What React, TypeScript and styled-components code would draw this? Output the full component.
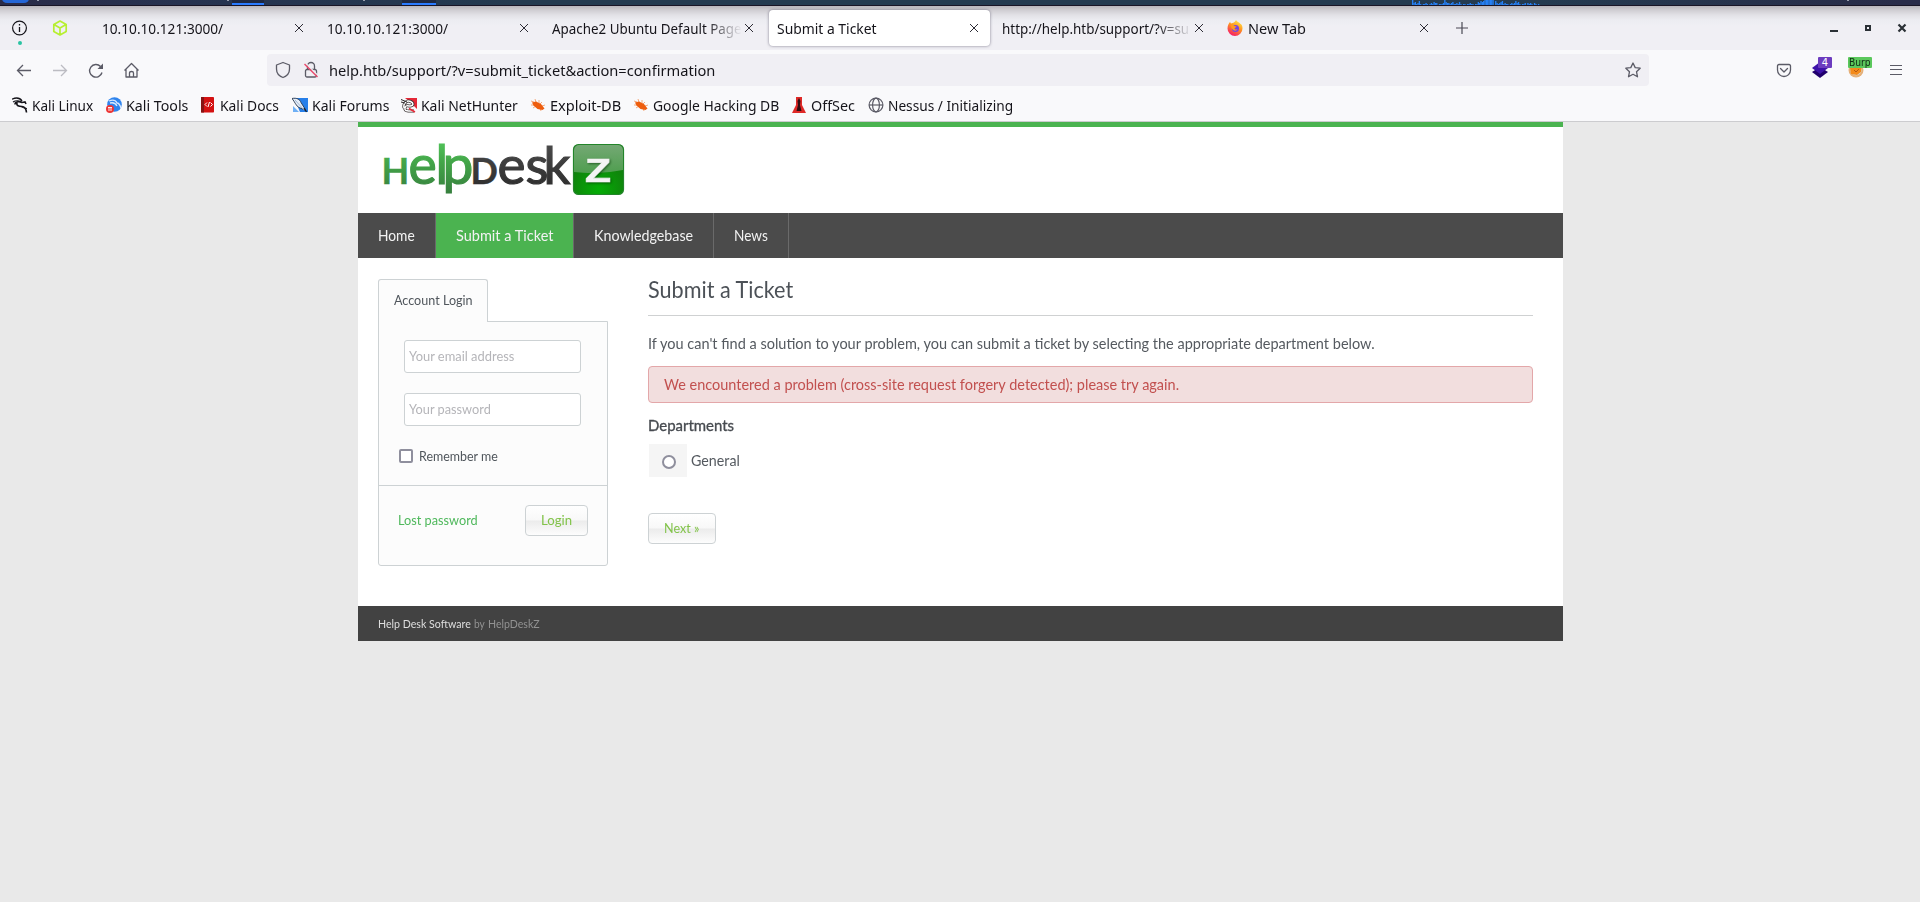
import React, { useLayoutEffect, useRef, useState } from 'react';
import styled, { createGlobalStyle } from 'styled-components';

const GlobalStyle = createGlobalStyle`
  * { box-sizing: border-box; }
  body {
    margin: 0;
    height: 902px;
    overflow: hidden;
    background: #e9e9e9;
    font-family: "Noto Sans", "Open Sans", sans-serif;
    color: #15141a;
  }
`;

/* ---------- condensed text ---------- */

const FitBox = styled.span<{ $w: number }>`
  display: block;
  flex: none;
  width: ${(p) => p.$w}px;
  white-space: nowrap;
  text-align: left;
`;
const FitInner = styled.span`
  display: inline-block;
  transform-origin: 0 50%;
`;

/** Condenses or widens its text so that the line is exactly `w` wide. */
function Fit({ w, children }: { w: number; children: React.ReactNode }) {
  const ref = useRef<HTMLSpanElement>(null);
  const [scale, setScale] = useState(1);
  useLayoutEffect(() => {
    if (ref.current) setScale(w / ref.current.offsetWidth);
  }, [w]);
  return (
    <FitBox $w={w}>
      <FitInner ref={ref} style={{ transform: `scaleX(${scale})` }}>{children}</FitInner>
    </FitBox>
  );
}

/* ---------- desktop panel ---------- */

const DesktopPanel = styled.div`
  height: 6px;
  border-bottom: 1px solid #191526;
  background: linear-gradient(90deg, #2a2b48 0, #273350 180px, #243b50 520px, #243b50 1540px, #292c49 1900px);
  svg { display: block; }
`;

const loads = [5, 2, 3, 1, 2, 4, 1, 0, 1, 1, 2, 1, 0, 1, 2, 1, 3, 2, 2, 0, 1, 1, 1, 2, 5, 3, 2, 2, 1, 2, 3, 1, 1, 2, 1, 3, 1, 0, 1, 1, 0, 1, 1, 2, 1, 1, 0, 1, 1, 3, 2, 4, 3, 4, 5, 5, 5, 5, 5, 5, 5, 0, 4, 2, 1, 2, 3, 4, 1, 2, 1, 1, 0, 1, 2, 1, 2, 4, 2, 3, 1, 0, 1, 1, 2, 0, 2, 1, 2, 1, 0, 2, 1, 0, 1];

const PanelArt = () => (
  <svg width="1920" height="5">
    <rect x="2" y="-6" width="27" height="9" rx="5" fill="#2466d6" />
    <rect x="37" width="2" height="1" fill="#999fae" />
    <rect x="227" width="2" height="1" fill="#999fae" />
    <rect x="363" width="2" height="1" fill="#999fae" />
    <rect x="1847" width="2" height="1" fill="#999fae" />
    <rect x="232" width="32" height="3" fill="#1e2842" />
    <rect x="402" width="34" height="3" fill="#1e2842" />
    <rect x="232" y="3" width="32" height="2" fill="#2a7bff" />
    <rect x="402" y="3" width="34" height="2" fill="#2a7bff" />
    {loads.map((h, i) => (
      <rect key={i} x={1412 + i * 1.34} y={5 - h} width="1.34" height={h} fill="#2580f5" />
    ))}
  </svg>
);

/* ---------- tab strip ---------- */

const TabStrip = styled.div`
  height: 44px;
  display: flex;
  align-items: center;
  background: linear-gradient(180deg, #b9b6bc 0, #cfcdd2 4px, #e2e1e6 9px, #ececf1 14px, #f0eff4 20px);
  font-size: 15px;
`;
const Pinned = styled.div`
  width: 40px;
  height: 44px;
  flex: none;
  display: flex;
  flex-direction: column;
  align-items: center;
  padding-top: 14px;
  gap: 4px;
`;
const Dot = styled.i`
  width: 4px;
  height: 4px;
  border-radius: 2px;
  background: #2ac3a2;
`;
const Tab = styled.div<{ $active?: boolean; $icon?: boolean; $first?: boolean }>`
  flex: none;
  width: 221px;
  height: 36px;
  margin: 0 2px 0 ${(p) => (p.$first ? 14 : 2)}px;
  padding: 0 9px 0 8px;
  display: flex;
  align-items: center;
  gap: 5px;
  border-radius: 4px;
  line-height: 36px;
  background: ${(p) => (p.$active ? '#fff' : 'transparent')};
  box-shadow: ${(p) => (p.$active ? '0 0 3px rgba(70, 66, 90, .65)' : 'none')};
`;
const TabTitle = styled.div<{ $fade?: boolean }>`
  flex: 1;
  min-width: 0;
  overflow: hidden;
  margin-right: -5px;
  mask-image: ${(p) => (p.$fade ? 'linear-gradient(90deg, #000 calc(100% - 36px), transparent 100%)' : 'none')};
`;
const NewTabButton = styled.div`
  width: 48px;
  padding-left: 12.5px;
  svg { display: block; }
`;
const WindowButtons = styled.div`
  margin-left: auto;
  padding-right: 12px;
  display: flex;
  gap: 22px;
`;

const CloseX = () => (
  <svg width="14" height="14" viewBox="-7 -7 14 14" stroke="#2d2c35" strokeWidth="1">
    <path d="M-4-4 4 4M4-4-4 4" />
  </svg>
);

/* ---------- navigation bar ---------- */

const NavBar = styled.div`
  height: 40px;
  display: flex;
  align-items: center;
  background: #f9f9fb;
  padding: 0 0 0 12px;
  svg { display: block; flex: none; }
`;
const NavButtons = styled.div`
  display: flex;
  width: 255px;
  gap: 12px;
`;
const UrlBar = styled.div`
  width: 1382px;
  height: 32px;
  border-radius: 4px;
  background: #f0eff4;
  display: flex;
  align-items: center;
  padding: 0 4px;
  font-size: 15px;
  line-height: 31px;
  > :nth-child(3) { margin-left: 7px; }
  > :last-child { margin-left: auto; }
`;
const Extensions = styled.div`
  display: flex;
  margin-left: 123px;
  gap: 12px;
  > :last-child { margin-left: 4px; }
`;
const ExtIcon = styled.div`
  position: relative;
  width: 24px;
  height: 24px;
`;
const Badge = styled.span<{ $bg: string; $fg: string; $w: number }>`
  position: absolute;
  top: -1px;
  right: ${(p) => (p.$w > 20 ? -4 : 0)}px;
  width: ${(p) => p.$w}px;
  height: 11px;
  border-radius: 1px;
  background: ${(p) => p.$bg};
  color: ${(p) => p.$fg};
  font: 10px/11px "DejaVu Sans", sans-serif;
  display: flex;
  justify-content: center;
`;

/* ---------- bookmarks ---------- */

const Bookmarks = styled.div`
  height: 32px;
  display: flex;
  gap: 12.2px;
  padding: 0 0 1px 12px;
  background: #f9f9fb;
  border-bottom: 1px solid #cccccf;
  font-size: 15px;
  line-height: 30px;
`;
const Bookmark = styled.div`
  display: flex;
  align-items: center;
  gap: 4px;
  svg { display: block; flex: none; }
`;

const Spider = () => (
  <svg width="16" height="16" viewBox="0 0 16 16">
    <path d="M1 4l3 1M1 8l4 0M3 11l3-2M5 2l1 3M9 3v3M12 5l-2 2M15 8l-3 1M11 14l-1-3" stroke="#f3a271" strokeWidth=".9" />
    <path d="M2 5.500 6 4.500l5 2.500 3.500 4.500-2 1.500-5-1-4-3.500z" fill="#ee5d0d" />
  </svg>
);

const bookmarkItems: { title: string; w: number; icon: React.ReactNode }[] = [
  {
    title: 'Kali Linux', w: 61.5, icon: (
      <svg width="16" height="16" viewBox="0 0 16 16" fill="none" stroke="#15141a">
        <path d="M0 2.2C4 .5 8 1 10 4" strokeWidth="1.4" />
        <path d="M1 5C4 3 8 3.500 9.500 5.200" strokeWidth="1.100" />
        <path d="M3 7.500C3 4 8 4.500 10 5.500L13 5l1 2M5 5.500C4 9 7 9.500 10 9.500s4 2 4.500 6" strokeWidth="1.600" />
        <path d="M9 9.500 12 11l3 .5" />
      </svg>
    ),
  },
  {
    title: 'Kali Tools', w: 62.5, icon: (
      <svg width="16" height="16" viewBox="0 0 16 16">
        <circle cx="8.500" cy="7.500" r="7.300" fill="#2f84ed" />
        <path d="M3 4c5-2 7 0 8 2 2 0 3 2 4 5M4 6c4-1 6 1 7 3" fill="none" stroke="#d8e9ff" strokeWidth="1.300" />
        <circle cx="4" cy="12" r="4" fill="#ed3434" />
        <path d="M2 10.500h4M3 10.500v3.500M5 10.500v3.500" stroke="#fff" strokeWidth=".9" />
      </svg>
    ),
  },
  {
    title: 'Kali Docs', w: 59, icon: (
      <svg width="16" height="16" viewBox="0 0 16 16">
        <rect x="1" width="13" height="15.500" rx=".8" fill="#d41111" />
        <rect x="1" width="3" height="15.500" fill="#861414" />
        <path d="M7 5.500 5 7.500l2 2M10.500 5.500l2 2-2 2M9.500 5 8 10" fill="none" stroke="#fff" />
      </svg>
    ),
  },
  {
    title: 'Kali Forums', w: 77.5, icon: (
      <svg width="16" height="16" viewBox="0 0 16 16">
        <path d="M2 1h14v14H8z" fill="#277fe9" />
        <path d="M1 9l6 6H1z" fill="#6fb0f5" />
        <path d="M0 1.500c5-1 8 1 9 4l5 8-7-3C4 9 3 5 0 1.500z" fill="#e5edf8" stroke="#26374d" strokeWidth=".9" />
        <path d="M3 3l9 10" stroke="#8fa9c9" strokeWidth=".8" />
        <path d="M12 11l2.500 4" stroke="#15202e" strokeWidth="1.300" />
      </svg>
    ),
  },
  {
    title: 'Kali NetHunter', w: 96.5, icon: (
      <svg width="16" height="16" viewBox="0 0 16 16" fill="none">
        <path d="M4 1h12v11L9 5z" fill="#e52837" />
        <path d="M3 11C2 6 6 3 9.500 4.500s3 4 0 4.500S5 7 4 11s6 3 9 3" stroke="#3b3435" strokeWidth="3" />
        <path d="M3 11C2 6 6 3 9.500 4.500s3 4 0 4.500S5 7 4 11s6 3 9 3" stroke="#fff" strokeWidth="1.500" />
        <path d="M0 2.500 6 5M0 5l4 1" stroke="#292526" />
        <path d="M8 11.500 14 15" stroke="#e52837" strokeWidth="1.500" />
      </svg>
    ),
  },
  { title: 'Exploit-DB', w: 71, icon: <Spider /> },
  { title: 'Google Hacking DB', w: 126, icon: <Spider /> },
  {
    title: 'OffSec', w: 44, icon: (
      <svg width="16" height="16" viewBox="0 0 16 16">
        <path d="M5 0h6v8l4 8H1l4-8z" fill="#df2927" />
        <path d="M8 1l1.500 3L9 8l1.500 6h-5L7 8l-.5-4z" fill="#320d12" />
      </svg>
    ),
  },
  {
    title: 'Nessus / Initializing', w: 125, icon: (
      <svg width="16" height="16" viewBox="0 0 16 16" fill="none" stroke="#5b5b66" strokeWidth="1.200">
        <circle cx="8" cy="8" r="6.900" />
        <ellipse cx="8" cy="8" rx="3.400" ry="6.900" />
        <path d="M1 8h14" />
      </svg>
    ),
  },
];

/* ---------- HelpDeskZ page ---------- */

const Site = styled.div`
  width: 1205px;
  margin-left: 358px;
  border-top: 5px solid #4bb350;
  background: #fff;
  font-family: Lato, "Noto Sans", sans-serif;
`;
const SiteHeader = styled.div`
  height: 86px;
  padding: 10px 0 0 25px;
  svg { display: block; }
`;
const SiteNav = styled.div`
  display: flex;
  height: 45px;
  background: #4b4b4b;
`;
const NavLink = styled.a<{ $active?: boolean }>`
  display: block;
  padding: 0 20px;
  border-right: 1px solid #6a6a6a;
  background: ${(p) => (p.$active ? '#4bb350' : 'transparent')};
  color: #f2f2f2;
  font-size: 16px;
  line-height: 43px;
`;
const Main = styled.div`
  display: flex;
  align-items: flex-start;
  height: 348px;
  padding: 21px 30px 0 20px;
  gap: 40px;
`;
const Sidebar = styled.div`
  width: 230px;
  color: #50565c;
  font-size: 14px;
`;
const LoginTab = styled.div`
  position: relative;
  width: 110px;
  height: 43px;
  margin-bottom: -1px;
  padding-left: 14.5px;
  border: 1px solid #cdd2d4;
  border-bottom: 0;
  border-radius: 3px 3px 0 0;
  background: #fcfcfc;
  line-height: 39px;
`;
const LoginPanel = styled.div`
  height: 245px;
  border: 1px solid #cdd2d4;
  border-radius: 0 0 3px 3px;
  background: #fcfcfc;
`;
const LoginFields = styled.div`
  height: 164px;
  padding: 18px 25px 0;
  border-bottom: 1px solid #cdd2d4;
`;
const Field = styled.div`
  width: 177px;
  height: 33px;
  margin-bottom: 20px;
  padding-left: 4px;
  border: 1px solid #cdd2d4;
  border-radius: 3px;
  background: #fff;
  color: #b5b5b9;
  line-height: 29px;
`;
const Remember = styled.label`
  display: flex;
  align-items: center;
  gap: 6px;
  margin: 21px 0 0 -5px;
  line-height: 17px;
`;
const CheckBox = styled.i`
  width: 14px;
  height: 14px;
  border: 2px solid #8f8f9d;
  border-radius: 2px;
  background: #fff;
`;
const LoginActions = styled.div`
  display: flex;
  justify-content: space-between;
  padding: 19px 19px 0;
  color: #4fb85c;
  line-height: 30px;
`;
const Button = styled.div<{ $w: number }>`
  width: ${(p) => p.$w}px;
  height: 31px;
  padding-left: 15px;
  border: 1px solid #cdd2d4;
  border-radius: 4px;
  background: linear-gradient(180deg, #fff 0, #f8f8f8 49%, #ebebeb 51%, #fdfdfd 100%);
  color: #82c34a;
  font-size: 14px;
  line-height: 28px;
`;
const Content = styled.div`
  flex: 1;
  color: #555a60;
  font-size: 16px;
`;
const Title = styled.div`
  height: 37px;
  border-bottom: 1px solid #cfd1d2;
  font-size: 24px;
  line-height: 19px;
  color: #4c5157;
`;
const Intro = styled.div`
  margin-top: 14px;
  line-height: 25px;
`;
const Alert = styled.div`
  height: 37px;
  margin-top: 11px;
  padding-left: 14.5px;
  border: 1px solid #e3a7a9;
  border-radius: 4px;
  background: #f2dede;
  color: #c2504f;
  line-height: 33px;
`;
const SubHead = styled.div`
  margin-top: 10px;
  height: 31px;
  line-height: 23px;
  -webkit-text-stroke: 0.35px #474b50;
  color: #474b50;
`;
const Department = styled.label`
  display: flex;
  align-items: flex-start;
  gap: 4px;
  height: 33px;
  margin: 0 0 36px 1px;
  line-height: 31px;
`;
const RadioCell = styled.div`
  width: 38px;
  height: 33px;
  padding: 11px 0 0 13px;
  background: #f5f5f5;
`;
const Radio = styled.i`
  display: block;
  width: 14px;
  height: 14px;
  border: 2px solid #8f8f9d;
  border-radius: 50%;
  background: #fff;
`;
const Footer = styled.div`
  display: flex;
  gap: 3px;
  height: 35px;
  padding-left: 20px;
  background: #424242;
  color: #929292;
  font-size: 12px;
  line-height: 35px;
  b { font-weight: 400; color: #dedede; }
`;

const Logo = () => (
  <svg width="242" height="76" viewBox="0 -1 242 76" fontFamily="Lato, sans-serif" strokeWidth="1.2">
    <defs>
      <linearGradient id="leaf" gradientUnits="userSpaceOnUse" x1="0" y1="5" x2="0" y2="58">
        <stop offset="0" stopColor="#50c158" />
        <stop offset=".35" stopColor="#43a649" />
        <stop offset="1" stopColor="#357c3c" />
      </linearGradient>
      <linearGradient id="ink" gradientUnits="userSpaceOnUse" x1="0" y1="5" x2="0" y2="50">
        <stop offset="0" stopColor="#4a4a4a" />
        <stop offset="1" stopColor="#2e2e2e" />
      </linearGradient>
      <radialGradient id="tile" cx=".5" cy=".9" r=".75">
        <stop offset="0" stopColor="#04ad05" />
        <stop offset="1" stopColor="#14750f" />
      </radialGradient>
      <linearGradient id="shine" x1="0" y1="0" x2="0" y2="1">
        <stop offset="0" stopColor="#74a874" />
        <stop offset="1" stopColor="#4f9e4f" />
      </linearGradient>
    </defs>
    <text y="45.500" fontSize="53.500" fill="url(#leaf)" stroke="url(#leaf)">
      <tspan x="-1.500" fontSize="36" fontWeight="700" strokeWidth=".4">H</tspan>
      <tspan x="25.500">e</tspan>
      <tspan x="52.500">l</tspan>
      <tspan x="59.500" fontSize="55">p</tspan>
    </text>
    <text y="45.500" fontSize="53" fill="url(#ink)" stroke="url(#ink)">
      <tspan x="87.500" fontSize="36" fontWeight="700" strokeWidth=".4">D</tspan>
      <tspan x="114.500">e</tspan>
      <tspan x="142.500">s</tspan>
      <tspan x="160.500">k</tspan>
    </text>
    <rect x="190.500" y="6.500" width="50" height="50" rx="5" fill="url(#tile)" stroke="#23852a" />
    <path d="M191 12a5 5 0 0 1 5-5h39a5 5 0 0 1 5 5v20q-24 5-49 2z" fill="url(#shine)" />
    <g fontFamily="Liberation Sans, sans-serif" fontWeight="700">
      <text
        x="202"
        y="43.500"
        fontSize="33"
        textLength="26"
        lengthAdjust="spacingAndGlyphs"
        fill="#f4f4f4"
        stroke="#f4f4f4"
        strokeWidth=".7"
        style={{ filter: 'drop-shadow(1px 1.5px 1px rgba(0, 50, 0, .6))' }}
      >
        Z
      </text>
    </g>
  </svg>
);

const FirefoxIcon = () => (
  <svg width="16" height="16" viewBox="0 0 16 16">
    <defs>
      <linearGradient id="flame" x1=".8" y1="0" x2=".3" y2="1">
        <stop offset="0" stopColor="#fff04a" />
        <stop offset=".45" stopColor="#ff9420" />
        <stop offset="1" stopColor="#f5156c" />
      </linearGradient>
    </defs>
    <path d="M9 0c1 2 3 2 4.500 4 1-.3 2 2 2 4.500a7.500 7.500 0 0 1-15 0C.5 5.500 2 3 3 2l1 1.500C6 3 8 2.500 9 0z" fill="url(#flame)" />
    <circle cx="8.500" cy="8.500" r="3.500" fill="#7543e3" />
    <path d="M3.500 5c2-.5 3 0 4 1l2 .5c0 1-2 1.200-2 2s2 1.500 3 .5c-1 3-6 2-7-4z" fill="#ff9a1f" />
  </svg>
);

export default function App() {
  return (
    <>
      <GlobalStyle />
      <DesktopPanel><PanelArt /></DesktopPanel>

      <TabStrip>
        <Pinned>
          <svg width="16" height="17" viewBox="0 0 16 17" fill="none" stroke="#15141a" strokeWidth="1.200">
            <circle cx="7.500" cy="8" r="6.900" />
            <path d="M7.500 7v5M7.500 4v1.500" strokeWidth="1.300" />
          </svg>
          <Dot />
        </Pinned>
        <Pinned>
          <svg width="16" height="16" viewBox="0 0 16 16" fill="none" stroke="#b7ef30" strokeWidth="1.700" strokeLinejoin="round">
            <path d="M8 1l6.200 3.500v7L8 15l-6.200-3.500v-7zM2 4.600 8 8l6-3.400M8 8v7" />
          </svg>
        </Pinned>
        <Tab $first>
          <TabTitle><Fit w={121}>10.10.10.121:3000/</Fit></TabTitle>
          <CloseX />
        </Tab>
        <Tab>
          <TabTitle><Fit w={121}>10.10.10.121:3000/</Fit></TabTitle>
          <CloseX />
        </Tab>
        <Tab>
          <TabTitle $fade><Fit w={190}>Apache2 Ubuntu Default Page</Fit></TabTitle>
          <CloseX />
        </Tab>
        <Tab $active>
          <TabTitle><Fit w={100}>Submit a Ticket</Fit></TabTitle>
          <CloseX />
        </Tab>
        <Tab>
          <TabTitle $fade><Fit w={187}>http://help.htb/support/?v=su</Fit></TabTitle>
          <CloseX />
        </Tab>
        <Tab $icon>
          <FirefoxIcon />
          <TabTitle><Fit w={58}>New Tab</Fit></TabTitle>
          <CloseX />
        </Tab>
        <NewTabButton>
          <svg width="14" height="14" viewBox="0 0 14 14" stroke="#4a4954" strokeWidth="1.200"><path d="M7 1v12M1 7h12" /></svg>
        </NewTabButton>
        <WindowButtons>
          <svg width="12" height="12" fill="#2a3035"><rect x="2" y="8" width="8" height="2" /></svg>
          <svg width="12" height="12" fill="none" stroke="#2a3035" strokeWidth="2"><rect x="4" y="4" width="4" height="4" /></svg>
          <svg width="12" height="12" stroke="#2a3035" strokeWidth="2.200"><path d="M2.500 2.500l7 7M9.500 2.500l-7 7" /></svg>
        </WindowButtons>
      </TabStrip>

      <NavBar>
        <NavButtons>
          <svg width="24" height="24" viewBox="-12 -12 24 24" fill="none" stroke="#5b5b66" strokeWidth="1.300">
            <path d="M7 .5H-6M-1-5-6.500.5-1 6" />
          </svg>
          <svg width="24" height="24" viewBox="-12 -12 24 24" fill="none" stroke="#bcbcc2" strokeWidth="1.300">
            <path d="M-7 .5H6M1-5 6.500.5 1 6" />
          </svg>
          <svg width="24" height="24" viewBox="-12 -12 24 24" fill="none" stroke="#5b5b66" strokeWidth="1.400">
            <path d="M6 2.500A6.300 6.300 0 1 1 4.500-3.500" />
            <path d="M7-6.500V-1H1.500z" fill="#5b5b66" stroke="none" />
          </svg>
          <svg width="24" height="24" viewBox="-12 -12 24 24" fill="none" stroke="#5b5b66" strokeWidth="1.300" strokeLinejoin="round">
            <path d="M-7.500 .5-.5-6.500 6.500 .5M-6-1v8H5v-8M-2.500 7V3q0-1.500 2-1.500T1.500 3v4" />
          </svg>
        </NavButtons>
        <UrlBar>
          <svg width="24" height="24" viewBox="-12 -12 24 24" fill="none" stroke="#5b5b66" strokeWidth="1.300" strokeLinejoin="round">
            <path d="M0-7.500 6.500-5V-1C6.500 3 4 6 0 7.500-4 6-6.500 3-6.500-1v-4z" />
          </svg>
          <svg width="27" height="24" viewBox="-16 -12 27 24" fill="none" stroke="#5b5b66" strokeWidth="1.300">
            <rect x="-5.500" y="-.5" width="11" height="7.500" rx="1.500" />
            <path d="M-3.500-.5V-4a3.500 3.500 0 0 1 7 0v3.500" />
            <path d="M-5.500-7 7.500 6" stroke="#f0eff4" strokeWidth="1.200" />
            <path d="M-6.500-6 6.500 7" stroke="#e8496c" strokeWidth="1.400" />
          </svg>
          <Fit w={386.5}>help.htb/support/?v=submit_ticket&amp;action=confirmation</Fit>
          <svg width="24" height="24" viewBox="-12 -12 24 24" fill="none" stroke="#5b5b66" strokeWidth="1.300" strokeLinejoin="round">
            <path d="M0-7 2.200-2.400 7.200-1.800 3.500 1.700 4.500 6.800 0 4.300-4.500 6.800-3.500 1.700-7.200-1.800-2.200-2.400z" />
          </svg>
        </UrlBar>
        <Extensions>
          <svg width="24" height="24" viewBox="-12 -12 24 24" fill="none" stroke="#5b5b66" strokeWidth="1.300" strokeLinecap="round" strokeLinejoin="round">
            <path d="M-5-5.500H5q1.500 0 1.500 1.500V0a6.500 6.500 0 0 1-13 0v-4q0-1.500 1.500-1.500zM-3.500-1.500 0 2l3.500-3.500" />
          </svg>
          <ExtIcon>
            <svg width="24" height="24" viewBox="-12 -12 24 24">
              <path d="M0-3 8 2 0 8-8 2z" fill="#21006d" />
              <path d="M0-8 8-2 0 4-8-2z" fill="#3d12a8" />
            </svg>
            <Badge $bg="#6c3cbf" $fg="#fff" $w={14}>4</Badge>
          </ExtIcon>
          <ExtIcon>
            <svg width="24" height="24" viewBox="-12 -12 24 24">
              <circle cy="0" r="7.500" fill="#e5b078" />
              <circle cy="-.5" r="5.800" fill="#d9e0e2" />
              <path d="M-6-2 3-3 6-5 5 2 1 5-5 4z" fill="#f48a19" />
              <path d="M-2 0l2 2 3-3" stroke="#b55c12" fill="none" />
            </svg>
            <Badge $bg="#5bc85c" $fg="#102a14" $w={24}><Fit w={22}>Burp</Fit></Badge>
          </ExtIcon>
          <svg width="24" height="24" viewBox="-12 -12 24 24" stroke="#5b5b66" strokeWidth="1">
            <path d="M-6-4.500H6M-6-.5H6M-6 4.500H6" />
          </svg>
        </Extensions>
      </NavBar>

      <Bookmarks>
        {bookmarkItems.map((b) => (
          <Bookmark key={b.title}>{b.icon}<Fit w={b.w}>{b.title}</Fit></Bookmark>
        ))}
      </Bookmarks>

      <Site>
        <SiteHeader><Logo /></SiteHeader>
        <SiteNav>
          <NavLink><Fit w={37}>Home</Fit></NavLink>
          <NavLink $active><Fit w={97}>Submit a Ticket</Fit></NavLink>
          <NavLink><Fit w={99}>Knowledgebase</Fit></NavLink>
          <NavLink><Fit w={34}>News</Fit></NavLink>
        </SiteNav>
        <Main>
          <Sidebar>
            <LoginTab><Fit w={79}>Account Login</Fit></LoginTab>
            <LoginPanel>
              <LoginFields>
                <Field><Fit w={105}>Your email address</Fit></Field>
                <Field><Fit w={82}>Your password</Fit></Field>
                <Remember><CheckBox /><Fit w={79}>Remember me</Fit></Remember>
              </LoginFields>
              <LoginActions>
                <Fit w={80}>Lost password</Fit>
                <Button $w={63}><Fit w={31}>Login</Fit></Button>
              </LoginActions>
            </LoginPanel>
          </Sidebar>
          <Content>
            <Title><Fit w={145}>Submit a Ticket</Fit></Title>
            <Intro><Fit w={727}>If you can't find a solution to your problem, you can submit a ticket by selecting the appropriate department below.</Fit></Intro>
            <Alert><Fit w={515}>We encountered a problem (cross-site request forgery detected); please try again.</Fit></Alert>
            <SubHead><Fit w={86}>Departments</Fit></SubHead>
            <Department>
              <RadioCell><Radio /></RadioCell>
              <Fit w={49}>General</Fit>
            </Department>
            <Button $w={68}><Fit w={35}>Next »</Fit></Button>
          </Content>
        </Main>
        <Footer>
          <b><Fit w={93}>Help Desk Software</Fit></b>
          <Fit w={11}>by</Fit>
          <Fit w={52}>HelpDeskZ</Fit>
        </Footer>
      </Site>
    </>
  );
}
